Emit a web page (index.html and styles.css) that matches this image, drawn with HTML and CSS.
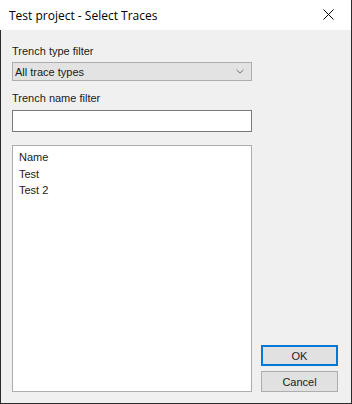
FILE: index.html
```html
<!doctype html>
<html lang="en">
  <head>
    <meta charset="UTF-8" />
    <meta name="viewport" content="width=device-width, initial-scale=1.0" />
    <title>Test project - Select Traces</title>
    <link rel="stylesheet" href="styles.css">
  </head>
  <body>
    <div class="window">
      <div class="titlebar">
        <span class="title">Test project - Select Traces</span>
        <button class="close" type="button" aria-label="Close">
          <svg width="11" height="11" viewBox="0 0 11 11">
            <path d="M0.5 0.5L10.5 10.5M10.5 0.5L0.5 10.5" stroke="#000" stroke-width="1" fill="none" />
          </svg>
        </button>
      </div>

      <div class="content">
        <div class="fields">
          <label class="field-label" for="type">Trench type filter</label>
          <div class="combo">
            <span id="type">All trace types</span>
            <svg width="8" height="5" viewBox="0 0 8 5">
              <path d="M0.5 0.8L4 4.2L7.5 0.8" stroke="#707070" stroke-width="1" fill="none" />
            </svg>
          </div>

          <label class="field-label second" for="name">Trench name filter</label>
          <input id="name" class="textbox" type="text" />

          <div class="listbox">
            <div class="item">Name</div>
            <div class="item">Test</div>
            <div class="item">Test 2</div>
          </div>
        </div>

        <div class="buttons">
          <button class="btn default" type="button">OK</button>
          <button class="btn" type="button">Cancel</button>
        </div>
      </div>
    </div>
  </body>
</html>
```

FILE: styles.css
```css
* {
  box-sizing: border-box;
}

body {
  margin: 0;
  font-family: "Liberation Sans", Arial, sans-serif;
  color: #000;
}

.window {
  display: flex;
  flex-direction: column;
  width: 352px;
  height: 404px;
  border-right: 1px solid #2b2b2b;
  border-bottom: 1px solid #2b2b2b;
  background: #fff;
}

.titlebar {
  display: flex;
  align-items: center;
  justify-content: space-between;
  height: 30px;
  padding-left: 9px;
  background: #fff;
}

.title {
  font-family: "Open Sans", "Noto Sans", sans-serif;
  font-size: 12px;
  color: #000;
}

.close {
  display: flex;
  align-items: center;
  justify-content: center;
  width: 46px;
  height: 30px;
  padding: 0 0 2px;
  border: none;
  background: transparent;
}

.content {
  display: flex;
  flex: 1;
  gap: 9px;
  padding: 15px 12px 11px 11px;
  border-left: 1px solid #2b2b2b;
  background: #f0f0f0;
  font-size: 11px;
  color: #1a1a1a;
}

.fields {
  display: flex;
  flex-direction: column;
  width: 240px;
}

.field-label {
  line-height: 13px;
  margin-bottom: 4px;
}

.field-label.second {
  margin-top: 11px;
  margin-bottom: 5px;
}

.combo {
  display: flex;
  align-items: center;
  justify-content: space-between;
  height: 19px;
  padding: 0 7px 0 2px;
  border: 1px solid #adadad;
  background: #e3e3e3;
}

.textbox {
  height: 22px;
  margin: 0 0 13px;
  border: 1px solid #7a7a7a;
  background: #fff;
  font: inherit;
}

.listbox {
  flex: 1;
  padding: 3px 6px;
  border: 1px solid #abadb3;
  background: #fff;
}

.item {
  line-height: 16.5px;
}

.buttons {
  display: flex;
  flex-direction: column;
  justify-content: flex-end;
  gap: 5px;
}

.btn {
  width: 77px;
  height: 21px;
  padding: 0;
  border: 1px solid #adadad;
  background: #e1e1e1;
  font: inherit;
  color: #1a1a1a;
}

.btn.default {
  border: 2px solid #0078d7;
}
```
